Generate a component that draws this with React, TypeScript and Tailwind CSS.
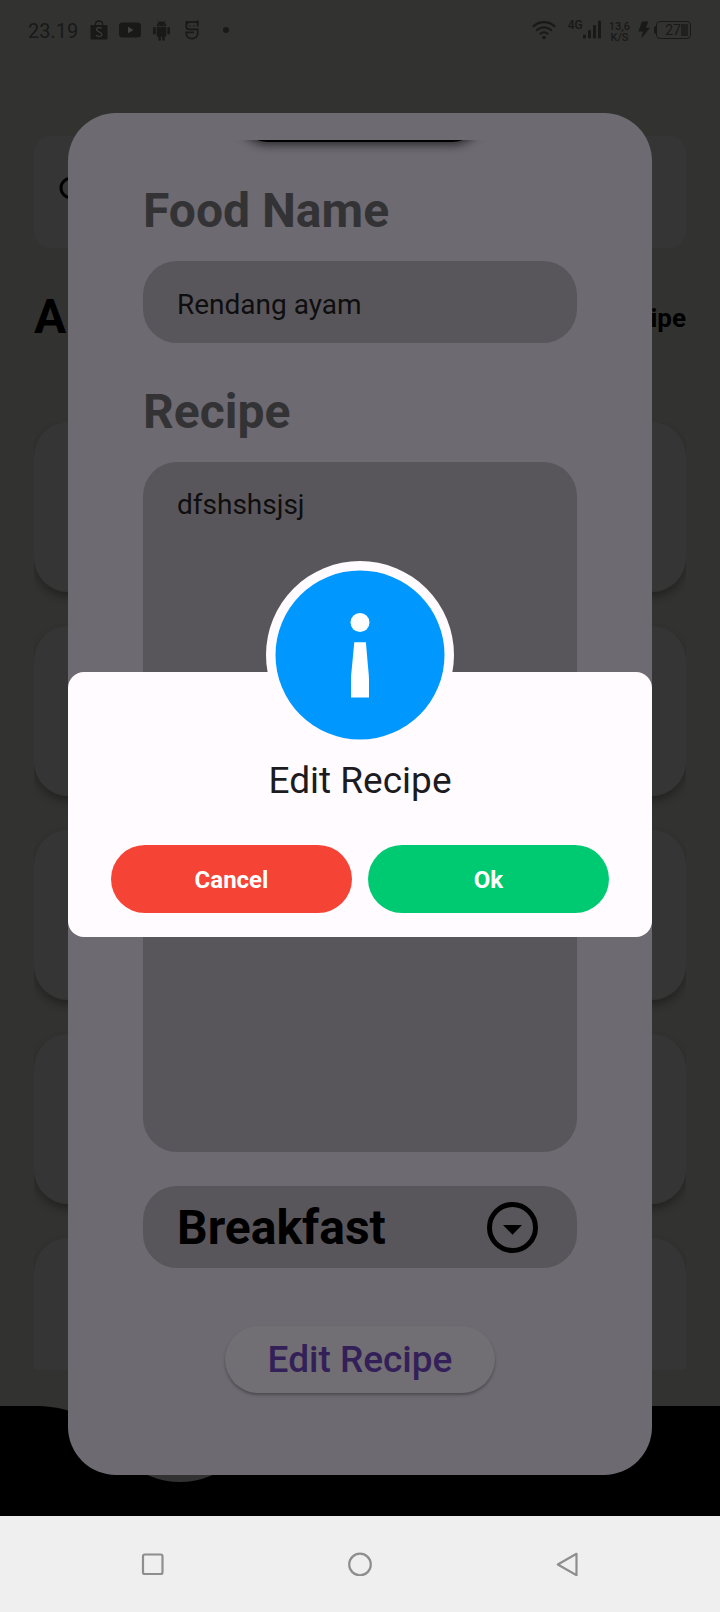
import { useState } from "react";

function StatusBar() {
  return (
    <header className="flex h-[60px] items-center justify-between px-7 text-[#191918]">
      <div className="flex items-center">
        <time className="w-[62px] pt-[1px] text-[20px] leading-6">23.19</time>
        <svg className="h-5 w-[18px]" viewBox="0 0 18 20" aria-hidden="true">
          <path d="M5.4 5V4.200a3.600 3.200 0 0 1 7.200 0V5" fill="none" stroke="currentColor" strokeWidth="1.300" />
          <path d="M.5 5h17v13.200a1.300 1.300 0 0 1-1.300 1.300H1.800a1.300 1.300 0 0 1-1.300-1.300z" fill="currentColor" />
          <path d="M11.700 8.500C9.500 7 6.500 7.500 6.500 9.600c0 2.600 5.400 2 5.400 4.800 0 2.400-3.600 2.700-5.800.9" fill="none" stroke="#3b3b39" strokeWidth="1.300" />
        </svg>
        <svg className="ml-[11px] h-4 w-[22px]" viewBox="0 0 22 16" aria-hidden="true">
          <rect y=".5" width="22" height="15" rx="3.500" fill="currentColor" />
          <path d="M9 4.800v6.400l5.500-3.200z" fill="#42423f" />
        </svg>
        <svg className="ml-3 h-[21px] w-[17px]" viewBox="0 0 17 21" fill="currentColor" aria-hidden="true">
          <path d="M3.700 6.300a4.800 4.800 0 0 1 9.600 0z" />
          <path d="M4.600.6 6 2.700M12.400.6 11 2.700" stroke="currentColor" strokeWidth=".8" />
          <path d="M3.700 7.100h9.600v8.400a1 1 0 0 1-1 1H4.700a1 1 0 0 1-1-1z" />
          <rect y="7.100" width="2.700" height="7.400" rx="1.300" />
          <rect x="14.300" y="7.100" width="2.700" height="7.400" rx="1.300" />
          <rect x="5.300" y="14" width="2.600" height="6.700" rx="1.200" />
          <rect x="9.100" y="14" width="2.600" height="6.700" rx="1.200" />
          <circle cx="6.400" cy="4.300" r=".5" fill="#323230" />
          <circle cx="10.600" cy="4.300" r=".5" fill="#323230" />
        </svg>
        <svg className="ml-[15px] h-5 w-[14px]" viewBox="0 0 14 20" fill="none" stroke="currentColor" strokeWidth="1.700" aria-hidden="true">
          <path d="M12.700 6.500V2.200H4.300a3 3 0 0 0-3 3v1.200a3 3 0 0 0 3 3h8.400v4.100c0 3-2.300 5.200-5.700 5.200s-5.700-2.200-5.700-5.200v-1.200h7.700" />
          <path d="M1.200 5V1.400L4 2.400M12.800 4.200V1L10.200 2.200" strokeWidth="1.200" />
          <path d="M4.300 5.800h1.200M8.300 5.800h1.200" strokeWidth="1.300" />
        </svg>
        <span className="ml-6 size-[6px] rounded-full bg-[#191918]" />
      </div>
      <div className="flex items-center">
        <svg className="h-5 w-6" viewBox="0 0 24 20" fill="none" stroke="currentColor" strokeWidth="2.200" strokeLinecap="round" aria-hidden="true">
          <path d="M1.500 6.200a15.500 15.500 0 0 1 21 0M5 10a10.400 10.400 0 0 1 14 0M8.500 13.700a5.200 5.200 0 0 1 7 0" />
          <circle cx="12" cy="17.500" r="1.800" fill="currentColor" stroke="none" />
        </svg>
        <span className="ml-3 self-start pt-[2px] text-[12px] leading-[12px] font-medium">4G</span>
        <svg className="h-5 w-[18px]" viewBox="0 0 18 20" fill="currentColor" aria-hidden="true">
          <rect y="14.500" width="3" height="4" rx="1.300" />
          <rect x="5" y="10" width="3" height="8.500" rx="1.300" />
          <rect x="10" y="5" width="3" height="13.500" rx="1.300" />
          <rect x="15" y=".5" width="3" height="18" rx="1.300" />
        </svg>
        <span className="ml-2 flex flex-col items-center pt-1 text-[11px] leading-[11px] font-medium">
          <span>13,6</span>
          <span>K/S</span>
        </span>
        <svg className="ml-2 h-[18px] w-3" viewBox="0 0 12 18" fill="currentColor" aria-hidden="true">
          <path d="M4 .5h6.300L8 6.800h4L3.200 17.600 5 10.600H.3z" />
        </svg>
        <span className="ml-1 h-2 w-[2px] rounded-l bg-[#191918]" />
        <span className="mr-[1px] flex h-[18px] w-[35px] items-center justify-end rounded-[4px] border-[1px] border-[#191918] pr-[2px] text-[14px] leading-4">
          27
          <span className="h-3 w-[7px] bg-[#20201f]" />
        </span>
      </div>
    </header>
  );
}

function HomeScreen() {
  return (
    <div className="flex flex-1 flex-col bg-[#323230]">
      <StatusBar />
      <div className="mx-[34px] mt-[76px] flex h-28 items-center rounded-[17px] bg-[#353535] pl-6 text-black">
        <svg className="size-9 shrink-0" viewBox="0 0 36 36" fill="none" stroke="currentColor" strokeWidth="3" aria-hidden="true">
          <circle cx="12.500" cy="14" r="9.500" />
          <path d="m19 21 10 10" />
        </svg>
        <input aria-label="Search" className="h-full min-w-0 flex-1 bg-transparent outline-none" />
      </div>
      <div className="mx-[34px] mt-[41px] flex items-center justify-between text-black">
        <h1 className="text-[48px] leading-[56px] font-bold">A</h1>
        <a href="#recipe" className="pt-[2px] text-[26px] leading-7 font-bold">ipe</a>
      </div>
      <div className="mx-[34px] mt-[77px] flex h-[948px] flex-col gap-[34px] overflow-hidden">
        {[1, 2, 3, 4, 5].map((card) => (
          <article key={card} className="h-[170px] shrink-0 rounded-[34px] bg-[#353535] shadow-[0_5px_9px_rgba(0,0,0,0.3)]" />
        ))}
      </div>
      <div className="mt-9 h-[110px]">
        <svg className="block h-[110px] w-[360px] overflow-visible" viewBox="0 0 360 110" aria-hidden="true">
          <path d="M0 0h34c14 0 24 1.500 34 4.500 28 9 50 50 112 50S270 0 320 0h2000v110H0z" fill="#000" />
          <circle cx="180" cy="-3" r="79" fill="#323232" />
        </svg>
      </div>
    </div>
  );
}

function EditSheet() {
  const [name, setName] = useState("Rendang ayam");
  const [recipe, setRecipe] = useState("dfshshsjsj");
  return (
    <div className="absolute inset-0 flex px-[68px] pt-[113px] pb-[41px]">
      <form className="flex flex-1 flex-col rounded-[48px] bg-[#6d6a71] px-[75px] pt-[27px]" onSubmit={(e) => e.preventDefault()}>
        <div className="flex h-6 justify-center overflow-hidden">
          <div className="-mt-[65px] h-[67px] w-[250px] rounded-[34px] bg-black shadow-[0_3px_10px_rgba(0,0,0,0.6)]" />
        </div>
        <label htmlFor="food" className="mt-[19px] text-[48px] leading-[56px] font-bold text-[#333335]">Food Name</label>
        <input
          id="food"
          value={name}
          onChange={(e) => setName(e.target.value)}
          className="mt-[22px] h-[82px] w-full rounded-[34px] bg-[#59565b] px-[34px] pt-1 text-[28px] text-[#0e0e0f] outline-none"
        />
        <label htmlFor="recipe" className="mt-[41px] text-[48px] leading-[56px] font-bold text-[#333335]">Recipe</label>
        <textarea
          id="recipe"
          value={recipe}
          onChange={(e) => setRecipe(e.target.value)}
          className="mt-[22px] h-[690px] w-full resize-none rounded-[34px] bg-[#59565b] px-[34px] py-[27px] text-[28px] leading-8 text-[#0e0e0f] outline-none"
        />
        <div className="relative mt-[34px]">
          <select aria-label="Category" className="block h-[82px] w-full appearance-none rounded-[34px] bg-[#59565b] pt-[2px] pr-24 pl-[34px] text-[48px] leading-[56px] font-bold text-black outline-none">
            <option>Breakfast</option>
          </select>
          <svg className="pointer-events-none absolute top-4 right-[39px] size-[51px]" viewBox="0 0 51 51" aria-hidden="true">
            <circle cx="25.500" cy="25.500" r="23" fill="none" stroke="#000" strokeWidth="5" />
            <path d="M16 23h19l-9.500 9.700z" />
          </svg>
        </div>
        <button type="submit" className="mt-[58px] h-[67px] w-[270px] self-center rounded-full bg-[#716f74] text-[37px] leading-[44px] font-medium text-[#342058] shadow-[0_2px_3px_rgba(0,0,0,0.3)]">
          Edit Recipe
        </button>
      </form>
    </div>
  );
}

function ConfirmDialog() {
  return (
    <div className="absolute inset-0 flex items-center px-[68px] pt-[93px]">
      <section role="dialog" aria-labelledby="dialog-title" className="relative flex flex-1 flex-col rounded-[16px] bg-[#fffbff] px-[43px] pt-[87px] pb-6">
        <div className="absolute -top-[111px] left-1/2 size-[188px] -translate-x-1/2 rounded-full bg-[#fffbff]">
          <svg className="size-full" viewBox="0 0 188 188" aria-hidden="true">
            <circle cx="94" cy="94" r="84.500" fill="#0098ff" />
            <circle cx="94" cy="61.500" r="9.500" fill="#fff" />
            <path d="M88.300 81.200h11.600l1.800 21c.8 9 1.300 12 1.300 17v17.400H85v-17.400c0-5 .5-8 1.300-17z" fill="#fff" />
          </svg>
        </div>
        <h2 id="dialog-title" className="text-center text-[37px] leading-[44px] text-[#1c1b1f]">Edit Recipe</h2>
        <div className="mt-[42px] flex gap-4 text-[24px] leading-7 font-bold text-white">
          <button type="button" className="h-[68px] flex-1 rounded-full bg-[#f54336] pt-[2px]">Cancel</button>
          <button type="button" className="h-[68px] flex-1 rounded-full bg-[#00ca71] pt-[2px]">Ok</button>
        </div>
      </section>
    </div>
  );
}

function SystemNav() {
  return (
    <nav className="relative flex h-24 items-center justify-around bg-[#efefef] px-[50px] text-[#8e8e8e]">
      <button type="button" aria-label="Recent apps">
        <svg className="size-6" viewBox="0 0 24 24" fill="none" stroke="currentColor" strokeWidth="2.200">
          <rect x="2" y="2.500" width="19.500" height="19.500" rx="1.800" />
        </svg>
      </button>
      <button type="button" aria-label="Home">
        <svg className="size-6" viewBox="0 0 24 24" fill="none" stroke="currentColor" strokeWidth="2.200">
          <circle cx="12" cy="12.500" r="10.800" />
        </svg>
      </button>
      <button type="button" aria-label="Back">
        <svg className="size-6" viewBox="0 0 24 24" fill="none" stroke="currentColor" strokeWidth="2.200" strokeLinejoin="round">
          <path d="M21.500 1.800v21.400L2.800 12.500z" />
        </svg>
      </button>
    </nav>
  );
}

export default function App() {
  return (
    <div className="flex min-h-screen flex-col font-['Roboto',sans-serif]">
      <main className="relative flex flex-1 flex-col overflow-hidden">
        <HomeScreen />
        <EditSheet />
        <ConfirmDialog />
      </main>
      <SystemNav />
    </div>
  );
}
